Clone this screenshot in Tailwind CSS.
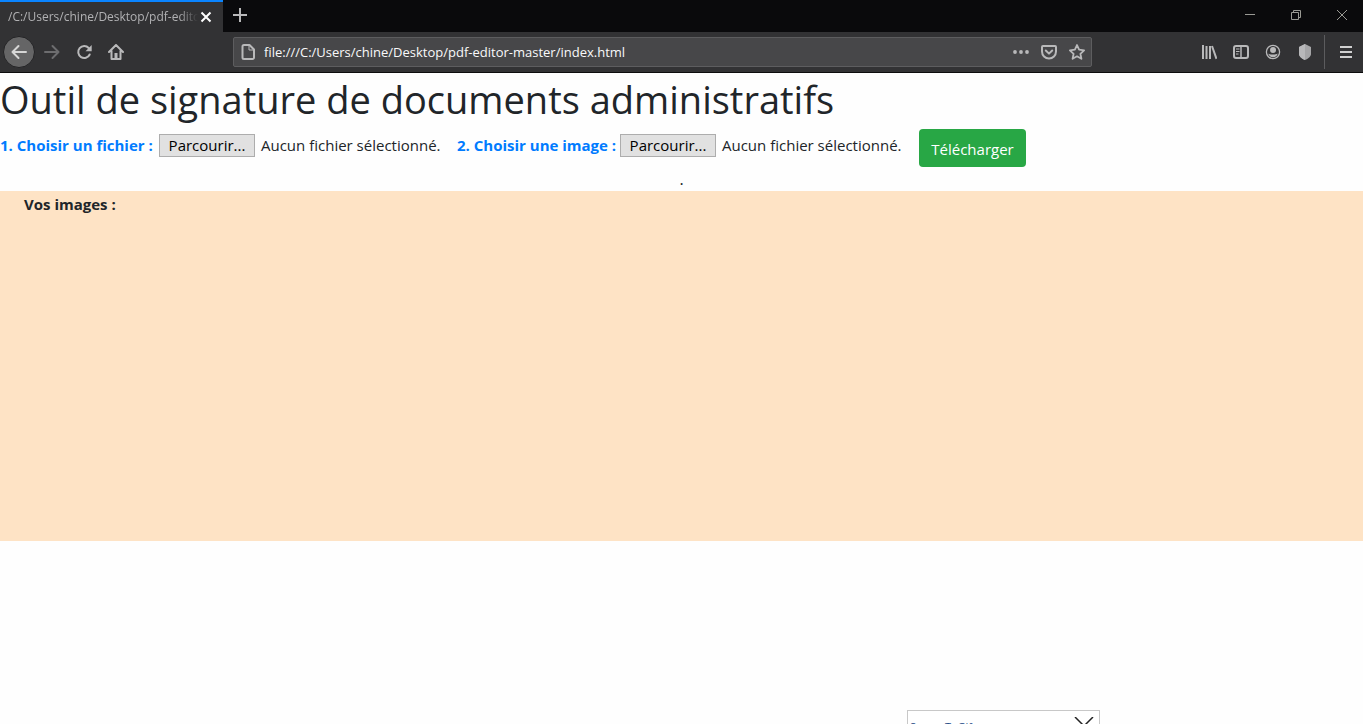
<!DOCTYPE html>
<html lang="fr">
<head>
<meta charset="utf-8">
<title>Outil de signature de documents administratifs</title>
<script src="https://cdn.jsdelivr.net/npm/@tailwindcss/browser@4"></script>
</head>
<body class="flex h-screen flex-col overflow-hidden bg-[#fefefe] font-['Open_Sans',sans-serif] text-[#212529]">
  <header class="shrink-0 border-b border-[#0c0c0d] bg-[#323234] text-[#b9b9ba]">
    <div class="flex h-8 bg-[#0a0a0c]">
      <div class="flex w-[223px] items-center border-t-2 border-[#0a84ff] bg-[#323234] px-2">
        <span class="min-w-0 flex-1 overflow-hidden mask-r-from-90% text-xs whitespace-nowrap text-[#b1b1b3]">/C:/Users/chine/Desktop/pdf-editor-master/index.html</span>
        <button aria-label="Fermer l'onglet" class="mr-px text-white"><svg class="size-4" viewBox="0 0 16 16" fill="none" stroke="currentColor" stroke-width="2"><path d="M3.500 3.500l9 9m0-9l-9 9"/></svg></button>
      </div>
      <button aria-label="Nouvel onglet" class="ml-[9px] pb-0.5"><svg class="size-4" viewBox="0 0 16 16" fill="none" stroke="currentColor" stroke-width="2"><path d="M8 1v14M1 8h14"/></svg></button>
      <div class="ml-auto flex pb-0.5 text-[#9a9a94]">
        <button aria-label="Réduire" class="flex w-[46px] items-center justify-center"><svg class="size-3" viewBox="0 0 12 12" fill="none" stroke="currentColor"><path d="M1 5.500h10"/></svg></button>
        <button aria-label="Restaurer" class="flex w-[46px] items-center justify-center"><svg class="size-3" viewBox="0 0 12 12" fill="none" stroke="currentColor"><path d="M1.500 3.500h7v7h-7zM3.500 3.500v-2h7v7h-2"/></svg></button>
        <button aria-label="Fermer" class="ml-0.5 flex w-[42px] items-center justify-center"><svg class="size-3" viewBox="0 0 12 12" fill="none" stroke="currentColor"><path d="M1 1l10 10M11 1L1 11"/></svg></button>
      </div>
    </div>
    <div class="flex h-10 items-center">
      <button aria-label="Page précédente" class="ml-[3px] flex size-8 items-center justify-center rounded-full border border-[#232325] bg-[#656566] text-[#d6d6d6]"><svg class="size-4" viewBox="0 0 16 16" fill="none" stroke="currentColor" stroke-width="2" stroke-linecap="round" stroke-linejoin="round"><path d="M15 8H1.500M7.500 2l-6 6 6 6"/></svg></button>
      <button aria-label="Page suivante" class="ml-[9px] text-[#6d6d6f]"><svg class="size-4" viewBox="0 0 16 16" fill="none" stroke="currentColor" stroke-width="2" stroke-linecap="round" stroke-linejoin="round"><path d="M1 8h13.500M8.500 2l6 6-6 6"/></svg></button>
      <button aria-label="Actualiser" class="ml-4"><svg class="size-4" viewBox="0 0 16 16" fill="none" stroke="currentColor" stroke-width="2" stroke-linecap="round"><path d="M13.700 10.500A6 6 0 1 1 12.700 4"/><path d="M15.700 1v6.200H9.500z" fill="currentColor" stroke="none"/></svg></button>
      <button aria-label="Accueil" class="ml-4"><svg class="size-4" viewBox="0 0 16 16" fill="none" stroke="currentColor" stroke-width="2" stroke-linecap="round" stroke-linejoin="round"><path d="M1 8l7-7 7 7M3.500 7v8h9V7"/><path d="M6.500 15V9h3v6z" fill="currentColor" stroke="none"/></svg></button>
      <div class="ml-[109px] flex h-[30px] min-w-0 flex-1 items-center gap-2 rounded-xs border border-[#5d5d5f] bg-[#474749] px-1.5">
        <svg class="size-4 shrink-0" viewBox="0 0 16 16" fill="none" stroke="currentColor" stroke-width="2" stroke-linejoin="round"><path d="M4 1h5.500l4.500 4.500v8a1.500 1.500 0 0 1-1.500 1.500H4A1.500 1.500 0 0 1 2.500 13.500v-11A1.500 1.500 0 0 1 4 1z"/><path d="M9 1v5h5" stroke-width="1"/></svg>
        <input aria-label="Adresse" class="min-w-0 flex-1 bg-transparent pt-0.5 text-[13px] text-[#f9f9fa] outline-none" value="file:///C:/Users/chine/Desktop/pdf-editor-master/index.html">
        <div class="flex shrink-0 gap-3">
          <button aria-label="Actions de la page"><svg class="size-4" viewBox="0 0 16 16" fill="currentColor"><circle cx="2" cy="8" r="1.900"/><circle cx="8" cy="8" r="1.900"/><circle cx="14" cy="8" r="1.900"/></svg></button>
          <button aria-label="Enregistrer dans Pocket"><svg class="size-4" viewBox="0 0 16 16" fill="none" stroke="currentColor" stroke-width="2" stroke-linecap="round" stroke-linejoin="round"><path d="M2 2h12a1 1 0 0 1 1 1v4.500a7 7 0 0 1-14 0V3a1 1 0 0 1 1-1z"/><path d="M4.800 6.500L8 9.600l3.200-3.100"/></svg></button>
          <button aria-label="Marquer cette page"><svg class="size-4" viewBox="0 0 16 16" fill="none" stroke="currentColor" stroke-width="1.800" stroke-linejoin="round"><path d="M8 1l2.100 4.700 5 .6-3.700 3.500 1 5L8 12.300l-4.400 2.500 1-5L.9 6.300l5-.6z"/></svg></button>
        </div>
      </div>
      <div class="ml-[109px] flex items-center gap-4">
        <button aria-label="Bibliothèque"><svg class="size-4" viewBox="0 0 16 16" fill="none" stroke="currentColor" stroke-width="2"><path d="M2 1v14M5.500 2v13M9 2v13"/><path d="M11 2l4.500 12.800"/></svg></button>
        <button aria-label="Panneaux latéraux"><svg class="size-4" viewBox="0 0 16 16" fill="none" stroke="currentColor" stroke-width="2"><rect x="1" y="2" width="14" height="12" rx="2"/><path d="M8 2v12" stroke-width="1.500"/><path d="M3 5h3.500M3 7.500h3.500M3 10h2.500" stroke-width="1.200"/></svg></button>
        <button aria-label="Compte"><svg class="size-4" viewBox="0 0 16 16"><circle cx="8" cy="8" r="6.600" fill="none" stroke="currentColor" stroke-width="1.300"/><circle cx="8" cy="6" r="3" fill="currentColor"/><path d="M3.300 9.500c1 .8 2.400 1 4.700 1s3.700-.2 4.700-1c-.4 2-2.200 3.800-4.700 3.800s-4.300-1.800-4.700-3.800z" fill="currentColor"/></svg></button>
        <button aria-label="Protection"><svg class="size-4" viewBox="0 0 16 16"><path d="M8 0l6 3v7c0 2.500-3 5-6 6-3-1-6-3.500-6-6V3z" fill="#a5a5a7"/><path d="M8 0v16c-3-1-6-3.500-6-6V3z" fill="#b8b8ba"/></svg></button>
      </div>
      <div class="ml-[11px] h-[34px] w-px bg-[#5c5c5e]"></div>
      <button aria-label="Menu" class="mr-[9px] ml-[13px]"><svg class="size-4" viewBox="0 0 16 16" fill="none" stroke="#d0d0d0" stroke-width="2"><path d="M2 3h12M2 8h12M2 13h12"/></svg></button>
    </div>
  </header>
  <main class="flex-1">
    <h1 class="mb-1.5 pt-0.5 text-[38px] leading-12 whitespace-nowrap">Outil de signature de documents administratifs</h1>
    <form class="flex items-start text-[15px] leading-6 whitespace-nowrap">
      <div class="mt-1 flex w-[457px] items-center">
        <label for="pdf" class="w-[159px] font-bold text-[#007bff]">1. Choisir un fichier :</label>
        <button type="button" id="pdf" class="h-[23px] w-24 border border-[#adadad] bg-[#e1e1e1] leading-5 text-black">Parcourir...</button>
        <span class="ml-1.5">Aucun fichier sélectionné.</span>
      </div>
      <div class="mt-1 flex w-[462px] items-center">
        <label for="image" class="w-[163px] font-bold text-[#007bff]">2. Choisir une image :</label>
        <button type="button" id="image" class="h-[23px] w-24 border border-[#adadad] bg-[#e1e1e1] leading-5 text-black">Parcourir...</button>
        <span class="ml-1.5">Aucun fichier sélectionné.</span>
      </div>
      <button type="button" class="h-[38px] w-[107px] rounded-sm bg-[#28a745] pt-0.5 text-white">Télécharger</button>
    </form>
    <p class="text-center text-base leading-6">.</p>
    <section class="h-[350px] bg-[#fee3c5] px-6 pt-px text-[15px] leading-6 font-bold">Vos images :</section>
  </main>
  <aside class="absolute top-[710px] left-[907px] flex h-9 w-[193px] justify-between border border-[#c8c8c8] bg-white px-0.5 text-[#1d4a85]">
    <span class="pt-2 text-[11px] leading-4">ScreenToGif</span>
    <button aria-label="Fermer ScreenToGif" class="mr-[3px] self-start pt-1.5 text-[#222]"><svg class="size-5" viewBox="0 0 20 20" fill="none" stroke="currentColor" stroke-width="1.500"><path d="M1 0l18 18M19 0L1 18"/></svg></button>
  </aside>
</body>
</html>
